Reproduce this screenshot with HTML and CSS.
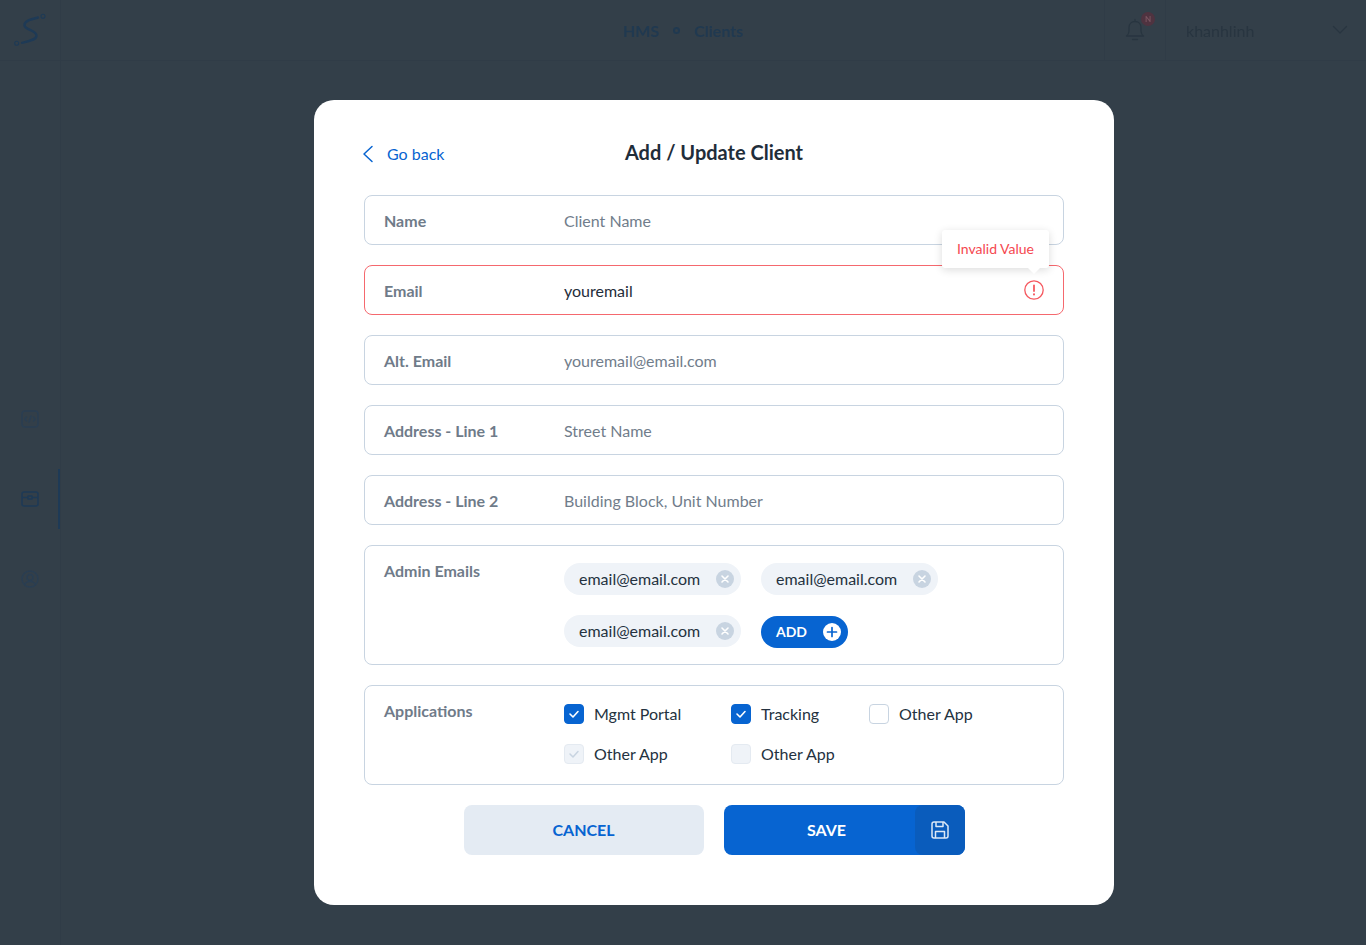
FILE: index.html
```html
<!DOCTYPE html>
<html lang="en">
<head>
    <meta charset="UTF-8">
    <meta name="viewport" content="width=device-width, initial-scale=1.0">
    <title>Add / Update Client</title>
    <link rel="stylesheet" href="styles.css">
</head>
<body>
    <div class="app">
        <header class="topbar">
            <div class="logo_box">
                <svg width="60" height="60" viewBox="0 0 60 60" fill="none" stroke="#1e3a56">
                    <path d="M38 17.500C30 19.500 24 21 24.500 25.500C25 30 37 30 36.500 36C36 40 28 41.500 22 42.800" stroke-width="2.400" stroke-linecap="round"/>
                    <circle cx="43" cy="16.300" r="2" stroke-width="1.100"/>
                    <circle cx="16.700" cy="43.300" r="2" stroke-width="1.100"/>
                </svg>
            </div>
            <div class="crumbs">
                <span>HMS</span>
                <i class="crumb_dot"></i>
                <span>Clients</span>
            </div>
            <div class="bell_box">
                <svg width="20" height="24" viewBox="0 0 20 24" fill="none" stroke="#283540" stroke-width="1.300" stroke-linecap="round" stroke-linejoin="round">
                    <path d="M10 1.500V3.500M1.500 18C3.500 16.500 4 15 4 13V9.500C4 6 6.500 3.500 10 3.500C13.500 3.500 16 6 16 9.500V13C16 15 16.500 16.500 18.500 18Z"/>
                    <path d="M7.500 21.500H12.500"/>
                </svg>
                <span class="bell_badge">N</span>
            </div>
            <div class="user_box">
                <span>khanhlinh</span>
                <svg width="16" height="10" viewBox="0 0 16 10" fill="none" stroke="#283540" stroke-width="1.300" stroke-linecap="round" stroke-linejoin="round">
                    <path d="M1.500 1.500L8 8L14.500 1.500"/>
                </svg>
            </div>
        </header>

        <nav class="sidebar">
            <a class="side_item">
                <svg width="18" height="18" viewBox="0 0 18 18" fill="none" stroke="#2a3e52" stroke-width="1.500" stroke-linecap="round" stroke-linejoin="round">
                    <rect x="1" y="1" width="16" height="16" rx="3"/>
                    <path d="M5.500 7L3.800 9L5.500 11M12.500 7L14.200 9L12.500 11M10 6L8 12"/>
                </svg>
            </a>
            <a class="side_item side_active">
                <svg width="18" height="16" viewBox="0 0 18 16" fill="none" stroke="#1e3a56" stroke-width="1.600" stroke-linejoin="round">
                    <rect x="1" y="1" width="16" height="14" rx="2"/>
                    <path d="M1 6.500H7M11 6.500H17"/>
                    <rect x="7" y="5" width="4" height="3"/>
                </svg>
            </a>
            <a class="side_item">
                <svg width="18" height="18" viewBox="0 0 18 18" fill="none" stroke="#2a3e52" stroke-width="1.500" stroke-linecap="round" stroke-linejoin="round">
                    <circle cx="9" cy="9" r="8"/>
                    <circle cx="9" cy="7.500" r="3"/>
                    <path d="M3.800 14.500C4.500 12.500 6.500 11.500 9 11.500C11.500 11.500 13.500 12.500 14.200 14.500"/>
                </svg>
            </a>
        </nav>
    </div>

    <div class="overlay">
        <form class="modal">
            <div class="modal_head">
                <a class="go_back">
                    <svg width="12" height="18" viewBox="0 0 12 18" fill="none" stroke="#0764d1" stroke-width="1.500" stroke-linecap="round" stroke-linejoin="round">
                        <path d="M10 1.500L2 9L10 16.500"/>
                    </svg>
                    Go back
                </a>
                <h1>Add / Update Client</h1>
            </div>

            <div class="field">
                <label>Name</label>
                <span class="placeholder">Client Name</span>
            </div>

            <div class="field field_error">
                <label>Email</label>
                <span class="value">youremail</span>
                <svg class="error_icon" width="20" height="20" viewBox="0 0 20 20" fill="none" stroke="#f5585f" stroke-linecap="round">
                    <circle cx="10" cy="10" r="9.200" stroke-width="1.300"/>
                    <path d="M10 5.500V11" stroke-width="1.800"/>
                    <path d="M10 14.300V14.500" stroke-width="2"/>
                </svg>
                <div class="tooltip">Invalid Value</div>
            </div>

            <div class="field">
                <label>Alt. Email</label>
                <span class="placeholder">youremail@email.com</span>
            </div>

            <div class="field">
                <label>Address - Line 1</label>
                <span class="placeholder">Street Name</span>
            </div>

            <div class="field">
                <label>Address - Line 2</label>
                <span class="placeholder">Building Block, Unit Number</span>
            </div>

            <div class="field field_tall field_emails">
                <label>Admin Emails</label>
                <div class="chips">
                    <span class="chip">email@email.com
                        <svg class="chip_x" width="18" height="18" viewBox="0 0 18 18"><circle cx="9" cy="9" r="9" fill="#c8d4e1"/><path d="M6 6L12 12M12 6L6 12" stroke="#fff" stroke-width="1.600" stroke-linecap="round"/></svg>
                    </span>
                    <span class="chip">email@email.com
                        <svg class="chip_x" width="18" height="18" viewBox="0 0 18 18"><circle cx="9" cy="9" r="9" fill="#c8d4e1"/><path d="M6 6L12 12M12 6L6 12" stroke="#fff" stroke-width="1.600" stroke-linecap="round"/></svg>
                    </span>
                    <span class="chip">email@email.com
                        <svg class="chip_x" width="18" height="18" viewBox="0 0 18 18"><circle cx="9" cy="9" r="9" fill="#c8d4e1"/><path d="M6 6L12 12M12 6L6 12" stroke="#fff" stroke-width="1.600" stroke-linecap="round"/></svg>
                    </span>
                    <span class="add_chip">ADD
                        <svg width="18" height="18" viewBox="0 0 18 18"><circle cx="9" cy="9" r="9" fill="#fff"/><path d="M9 4.500V13.500M4.500 9H13.500" stroke="#0764d1" stroke-width="1.700" stroke-linecap="round"/></svg>
                    </span>
                </div>
            </div>

            <div class="field field_tall field_apps">
                <label>Applications</label>
                <div class="apps">
                    <span class="app_opt"><i class="check is_on"><svg width="12" height="10" viewBox="0 0 12 10" fill="none" stroke="#fff" stroke-width="1.600" stroke-linecap="round" stroke-linejoin="round"><path d="M2 5L5 8L10 2.500"/></svg></i>Mgmt Portal</span>
                    <span class="app_opt"><i class="check is_on"><svg width="12" height="10" viewBox="0 0 12 10" fill="none" stroke="#fff" stroke-width="1.600" stroke-linecap="round" stroke-linejoin="round"><path d="M2 5L5 8L10 2.500"/></svg></i>Tracking</span>
                    <span class="app_opt"><i class="check"></i>Other App</span>
                    <span class="app_opt"><i class="check is_disabled"><svg width="12" height="10" viewBox="0 0 12 10" fill="none" stroke="#c8d4e1" stroke-width="1.500" stroke-linecap="round" stroke-linejoin="round"><path d="M2 5L5 8L10 2.500"/></svg></i>Other App</span>
                    <span class="app_opt"><i class="check is_disabled"></i>Other App</span>
                </div>
            </div>

            <div class="actions">
                <button type="button" class="btn_cancel">CANCEL</button>
                <button type="button" class="btn_save">
                    <span class="save_text">SAVE</span>
                    <span class="save_icon">
                        <svg width="18" height="18" viewBox="0 0 18 18" fill="none" stroke="#dce8f6" stroke-width="1.500" stroke-linejoin="round">
                            <path d="M3 1H13L17 5V15C17 16.100 16.100 17 15 17H3C1.900 17 1 16.100 1 15V3C1 1.900 1.900 1 3 1Z"/>
                            <path d="M5 1V5.500H12V1M4.500 17V10.500H13.500V17"/>
                        </svg>
                    </span>
                </button>
            </div>
        </form>
    </div>
</body>
</html>
```

FILE: styles.css
```css
*, *:after, *:before {
    box-sizing: border-box;
}

body {
    font-family: Lato, "Open Sans", sans-serif;
    font-size: 16px;
    margin: 0;
    background: #333f49;
    color: #243240;
    min-height: 100vh;
}

/* page behind the modal, already dimmed */
.app {
    min-height: 945px;
    will-change: opacity;
}

.topbar {
    height: 61px;
    display: flex;
    align-items: center;
    border-bottom: 1px solid #303c47;
}

.logo_box {
    width: 61px;
    height: 60px;
    flex: none;
    border-right: 1px solid #303c47;
}

.crumbs {
    flex: 1;
    display: flex;
    align-items: center;
    padding-left: 562px;
    gap: 14px;
    font-weight: 700;
    color: #203950;
}

.crumb_dot {
    width: 7px;
    height: 7px;
    border: 2px solid #203950;
    border-radius: 50%;
}

.bell_box {
    position: relative;
    width: 62px;
    height: 60px;
    flex: none;
    display: flex;
    align-items: center;
    justify-content: center;
    border-left: 1px solid #303c47;
    border-right: 1px solid #303c47;
}

.bell_badge {
    position: absolute;
    top: 12px;
    left: 36px;
    width: 14px;
    height: 14px;
    border-radius: 50%;
    background: #4f3340;
    color: #7a5561;
    font-size: 8px;
    font-weight: 700;
    line-height: 14px;
    text-align: center;
}

.user_box {
    width: 200px;
    flex: none;
    display: flex;
    justify-content: space-between;
    align-items: center;
    padding: 0 18px 0 20px;
    color: #283540;
}

.sidebar {
    width: 61px;
    height: 884px;
    padding-top: 318px;
    border-right: 1px solid #303c47;
    display: flex;
    flex-direction: column;
}

.side_item {
    height: 80px;
    display: flex;
    align-items: center;
    padding-left: 21px;
    border-right: 2px solid transparent;
}

.side_active {
    border-right-color: #1e3a56;
    height: 60px;
    margin: 10px 0;
}

.overlay {
    position: fixed;
    top: 0;
    left: 0;
    right: 0;
    bottom: 0;
    display: flex;
    justify-content: center;
    padding: 100px 0 0 62px;
}

.modal {
    width: 800px;
    height: 805px;
    background: white;
    border-radius: 20px;
    padding: 0 50px 50px;
    display: flex;
    flex-direction: column;
    gap: 20px;
    will-change: opacity;
}

.modal_head {
    height: 75px;
    padding-top: 30px;
    display: grid;
    grid-template-columns: 1fr auto 1fr;
    align-items: center;
}

.go_back {
    grid-column: 1;
    grid-row: 1;
    display: flex;
    align-items: center;
    gap: 13px;
    color: #0764d1;
    margin: 2px 0 0 -2px;
}

h1 {
    grid-column: 2;
    grid-row: 1;
    margin: -2px 0 0;
    font-size: 20px;
    font-weight: 700;
    color: #1f2d3a;
}

.field {
    position: relative;
    height: 50px;
    flex: none;
    display: flex;
    align-items: center;
    padding: 0 19px;
    border: 1px solid #c8d4e1;
    border-radius: 8px;
}

.field label {
    width: 180px;
    flex: none;
    font-weight: 700;
    color: #6f7b89;
}

.placeholder {
    color: #717d8b;
}

.value {
    color: #1f2d3a;
}

.field_error {
    border-color: #f5686e;
}

.error_icon {
    position: absolute;
    right: 19px;
    top: 14px;
}

.tooltip {
    position: absolute;
    right: 14px;
    top: -36px;
    width: 107px;
    height: 38px;
    background: white;
    border-radius: 3px;
    box-shadow: 0 2px 8px rgba(0,0,0,0.14);
    color: #f5484f;
    font-size: 14px;
    line-height: 38px;
    text-align: center;
}

.tooltip:after {
    content: "";
    position: absolute;
    right: 9px;
    bottom: -6px;
    border-left: 6px solid transparent;
    border-right: 6px solid transparent;
    border-top: 6px solid white;
}

.field_tall {
    align-items: flex-start;
}

.field_tall label {
    margin-top: -2px;
}

.field_emails {
    height: 120px;
    padding-top: 17px;
}

.field_apps {
    height: 100px;
    padding-top: 17px;
}

.chips {
    display: flex;
    flex-wrap: wrap;
    gap: 20px;
    width: 400px;
}

.chip {
    width: 177px;
    height: 32px;
    display: flex;
    align-items: center;
    justify-content: space-between;
    padding: 0 7px 2px 15px;
    border-radius: 16px;
    background: #eff3f8;
    color: #243240;
}

.chip_x {
    margin-top: 2px;
}

.add_chip {
    width: 87px;
    height: 32px;
    display: flex;
    align-items: center;
    justify-content: space-between;
    margin-top: 1px;
    padding: 0 7px 2px 15px;
    border-radius: 16px;
    background: #0764d1;
    color: white;
    font-size: 14px;
    font-weight: 700;
}

.add_chip svg {
    margin-top: 2px;
}

.apps {
    display: grid;
    grid-template-columns: 167px 138px auto;
    row-gap: 20px;
    margin-top: 1px;
}

.app_opt {
    height: 20px;
    display: flex;
    align-items: center;
    gap: 10px;
    padding-bottom: 2px;
    color: #243240;
}

.check {
    width: 20px;
    height: 20px;
    flex: none;
    display: flex;
    align-items: center;
    justify-content: center;
    margin-top: 2px;
    border: 1px solid #c8d4e1;
    border-radius: 4px;
}

.is_on {
    background: #0764d1;
    border-color: #0764d1;
}

.is_disabled {
    background: #eff3f8;
    border-color: #e4eaf1;
}

.actions {
    display: flex;
    justify-content: center;
    gap: 20px;
}

.actions button {
    height: 50px;
    font-family: Lato, "Open Sans", sans-serif;
    font-size: 16px;
    font-weight: 700;
    border: 0;
    border-radius: 8px;
    padding: 0;
    cursor: pointer;
}

.actions .btn_cancel {
    width: 240px;
    padding-bottom: 2px;
    background: #e4ebf3;
    color: #0764d1;
}

.btn_save {
    width: 241px;
    display: flex;
    background: #0764d1;
    color: white;
    overflow: hidden;
}

.save_text {
    flex: 1;
    line-height: 50px;
    text-align: center;
    padding-left: 15px;
}

.save_icon {
    width: 50px;
    height: 50px;
    display: flex;
    align-items: center;
    justify-content: center;
    background: #0a5cbc;
    border-radius: 8px 0 0 8px;
}
```
